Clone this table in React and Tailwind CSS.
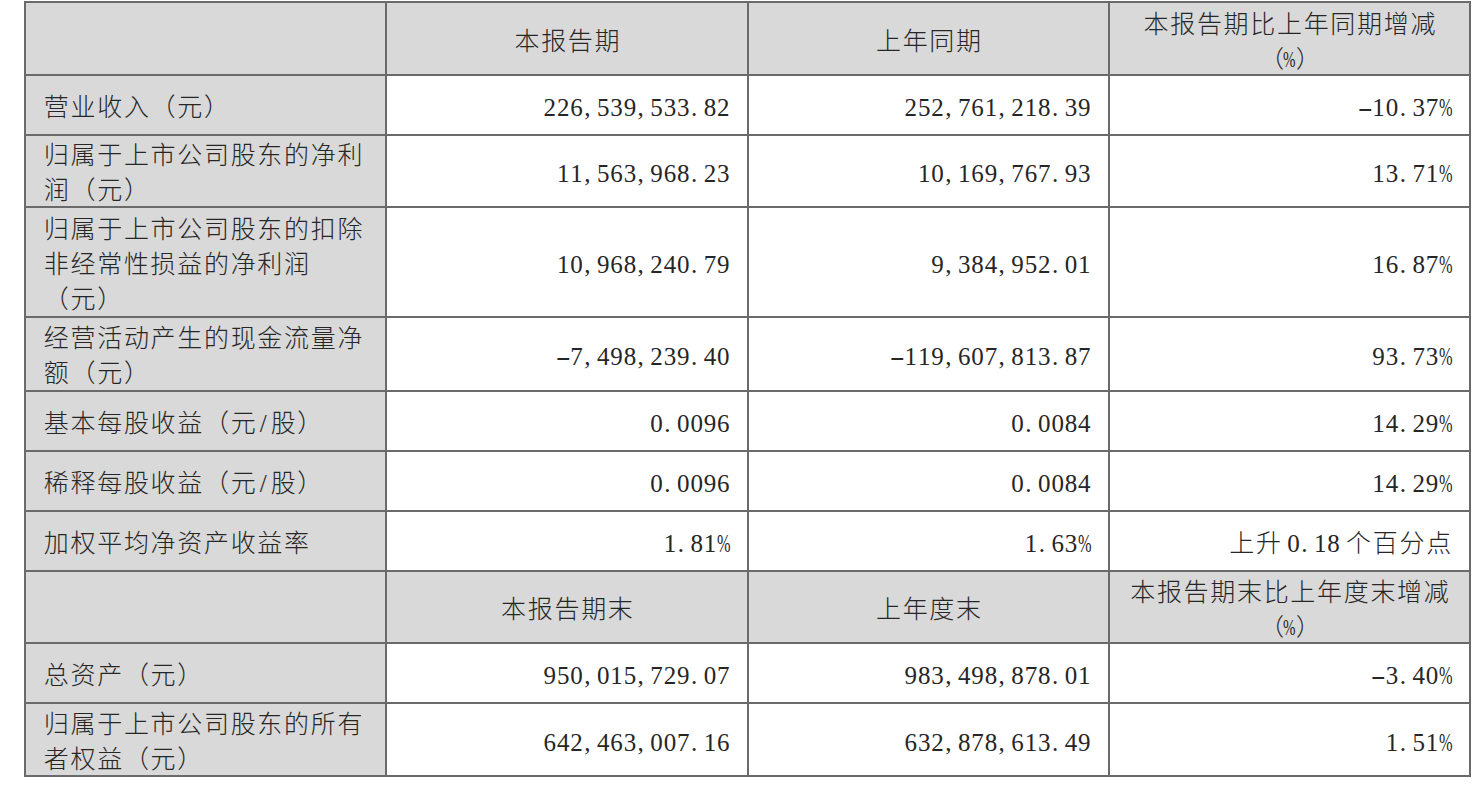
const isWide = (c) => c.charCodeAt(0) >= 0x2e80;

const serif = "font-['Liberation_Serif',serif] leading-none";
const cjk = "font-['Noto_Sans_CJK_SC',sans-serif] font-light leading-none";

function Chars({ text, small }) {
  return [...text].map((c, i) => {
    if (isWide(c)) {
      return (
        <span
          key={i}
          className={
            small
              ? `inline-block w-[23px] text-center text-[24px] ${cjk}`
              : `inline-block w-[26.7px] text-center text-[25px] ${cjk}`
          }
        >
          {c}
        </span>
      );
    }
    if (c === " ") {
      return <span key={i} className="inline-block w-[5px]"> </span>;
    }
    if (c === "-") {
      return (
        <span key={i} className={`inline-block w-[13.35px] text-center text-[25px] ${serif}`}>
          <span className="inline-block scale-x-[1.8] font-light">-</span>
        </span>
      );
    }
    if (c === "%") {
      return (
        <span
          key={i}
          className={
            small
              ? `inline-block w-[13px] text-[23px] ${serif}`
              : `inline-block w-[13.35px] text-[25px] ${serif}`
          }
        >
          <span className="inline-block origin-left scale-x-[0.65]">%</span>
        </span>
      );
    }
    if (c === "," || c === ".") {
      return (
        <span key={i} className={`inline-block w-[13.35px] pl-[1px] text-left text-[25px] ${serif}`}>
          {c}
        </span>
      );
    }
    return (
      <span key={i} className={`inline-block w-[13.35px] text-center text-[25px] ${serif}`}>
        {c}
      </span>
    );
  });
}

const rows = [
  { head: true, h: "h-[73px]", cells: [["本报告期"], ["上年同期"], ["本报告期比上年同期增减", "（%）"]] },
  { h: "h-[60px]", label: ["营业收入（元）"], vals: ["226,539,533.82", "252,761,218.39", "-10.37%"] },
  { h: "h-[72px]", label: ["归属于上市公司股东的净利", "润（元）"], vals: ["11,563,968.23", "10,169,767.93", "13.71%"] },
  {
    h: "h-[110px]",
    label: ["归属于上市公司股东的扣除", "非经常性损益的净利润", "（元）"],
    vals: ["10,968,240.79", "9,384,952.01", "16.87%"],
  },
  { h: "h-[74px]", label: ["经营活动产生的现金流量净", "额（元）"], vals: ["-7,498,239.40", "-119,607,813.87", "93.73%"] },
  { h: "h-[60px]", label: ["基本每股收益（元/股）"], vals: ["0.0096", "0.0084", "14.29%"] },
  { h: "h-[60px]", label: ["稀释每股收益（元/股）"], vals: ["0.0096", "0.0084", "14.29%"] },
  { h: "h-[60px]", label: ["加权平均净资产收益率"], vals: ["1.81%", "1.63%", "上升 0.18 个百分点"] },
  { head: true, h: "h-[72px]", cells: [["本报告期末"], ["上年度末"], ["本报告期末比上年度末增减", "（%）"]] },
  { h: "h-[60px]", label: ["总资产（元）"], vals: ["950,015,729.07", "983,498,878.01", "-3.40%"] },
  { h: "h-[73px]", label: ["归属于上市公司股东的所有", "者权益（元）"], vals: ["642,463,007.16", "632,878,613.49", "1.51%"] },
];

const cell = "border-2 border-[#6a6a6a] p-0 align-middle";
const line = "whitespace-nowrap text-[25px] font-['Noto_Sans_CJK_SC',sans-serif]";

export default function App() {
  return (
    <div className="min-h-screen bg-white pl-[24px] pt-[1px] text-[#262626]">
      <table className="w-[1447px] table-fixed border-collapse">
        <colgroup>
          <col className="w-[361px]" />
          <col className="w-[362px]" />
          <col className="w-[361px]" />
          <col className="w-[361px]" />
        </colgroup>
        <tbody>
          {rows.map((row, r) =>
            row.head ? (
              <tr key={r} className={row.h}>
                <td className={`${cell} bg-[#d9d9d9]`} />
                {row.cells.map((lines, i) => (
                  <td key={i} className={`${cell} bg-[#d9d9d9] text-center`}>
                    {lines.map((text, j) => (
                      <div key={j} className={`${line} leading-[34px]`}>
                        <Chars text={text} small={j > 0} />
                      </div>
                    ))}
                  </td>
                ))}
              </tr>
            ) : (
              <tr key={r} className={row.h}>
                <td className={`${cell} bg-[#d9d9d9] pl-[17px] text-left`}>
                  {row.label.map((text, j) => (
                    <div key={j} className={`${line} leading-[35px]`}>
                      <Chars text={text} />
                    </div>
                  ))}
                </td>
                {row.vals.map((v, i) => (
                  <td key={i} className={`${cell} bg-white pr-[17px] text-right`}>
                    <div className={`${line} leading-[36px]`}>
                      <Chars text={v} />
                    </div>
                  </td>
                ))}
              </tr>
            )
          )}
        </tbody>
      </table>
    </div>
  );
}
